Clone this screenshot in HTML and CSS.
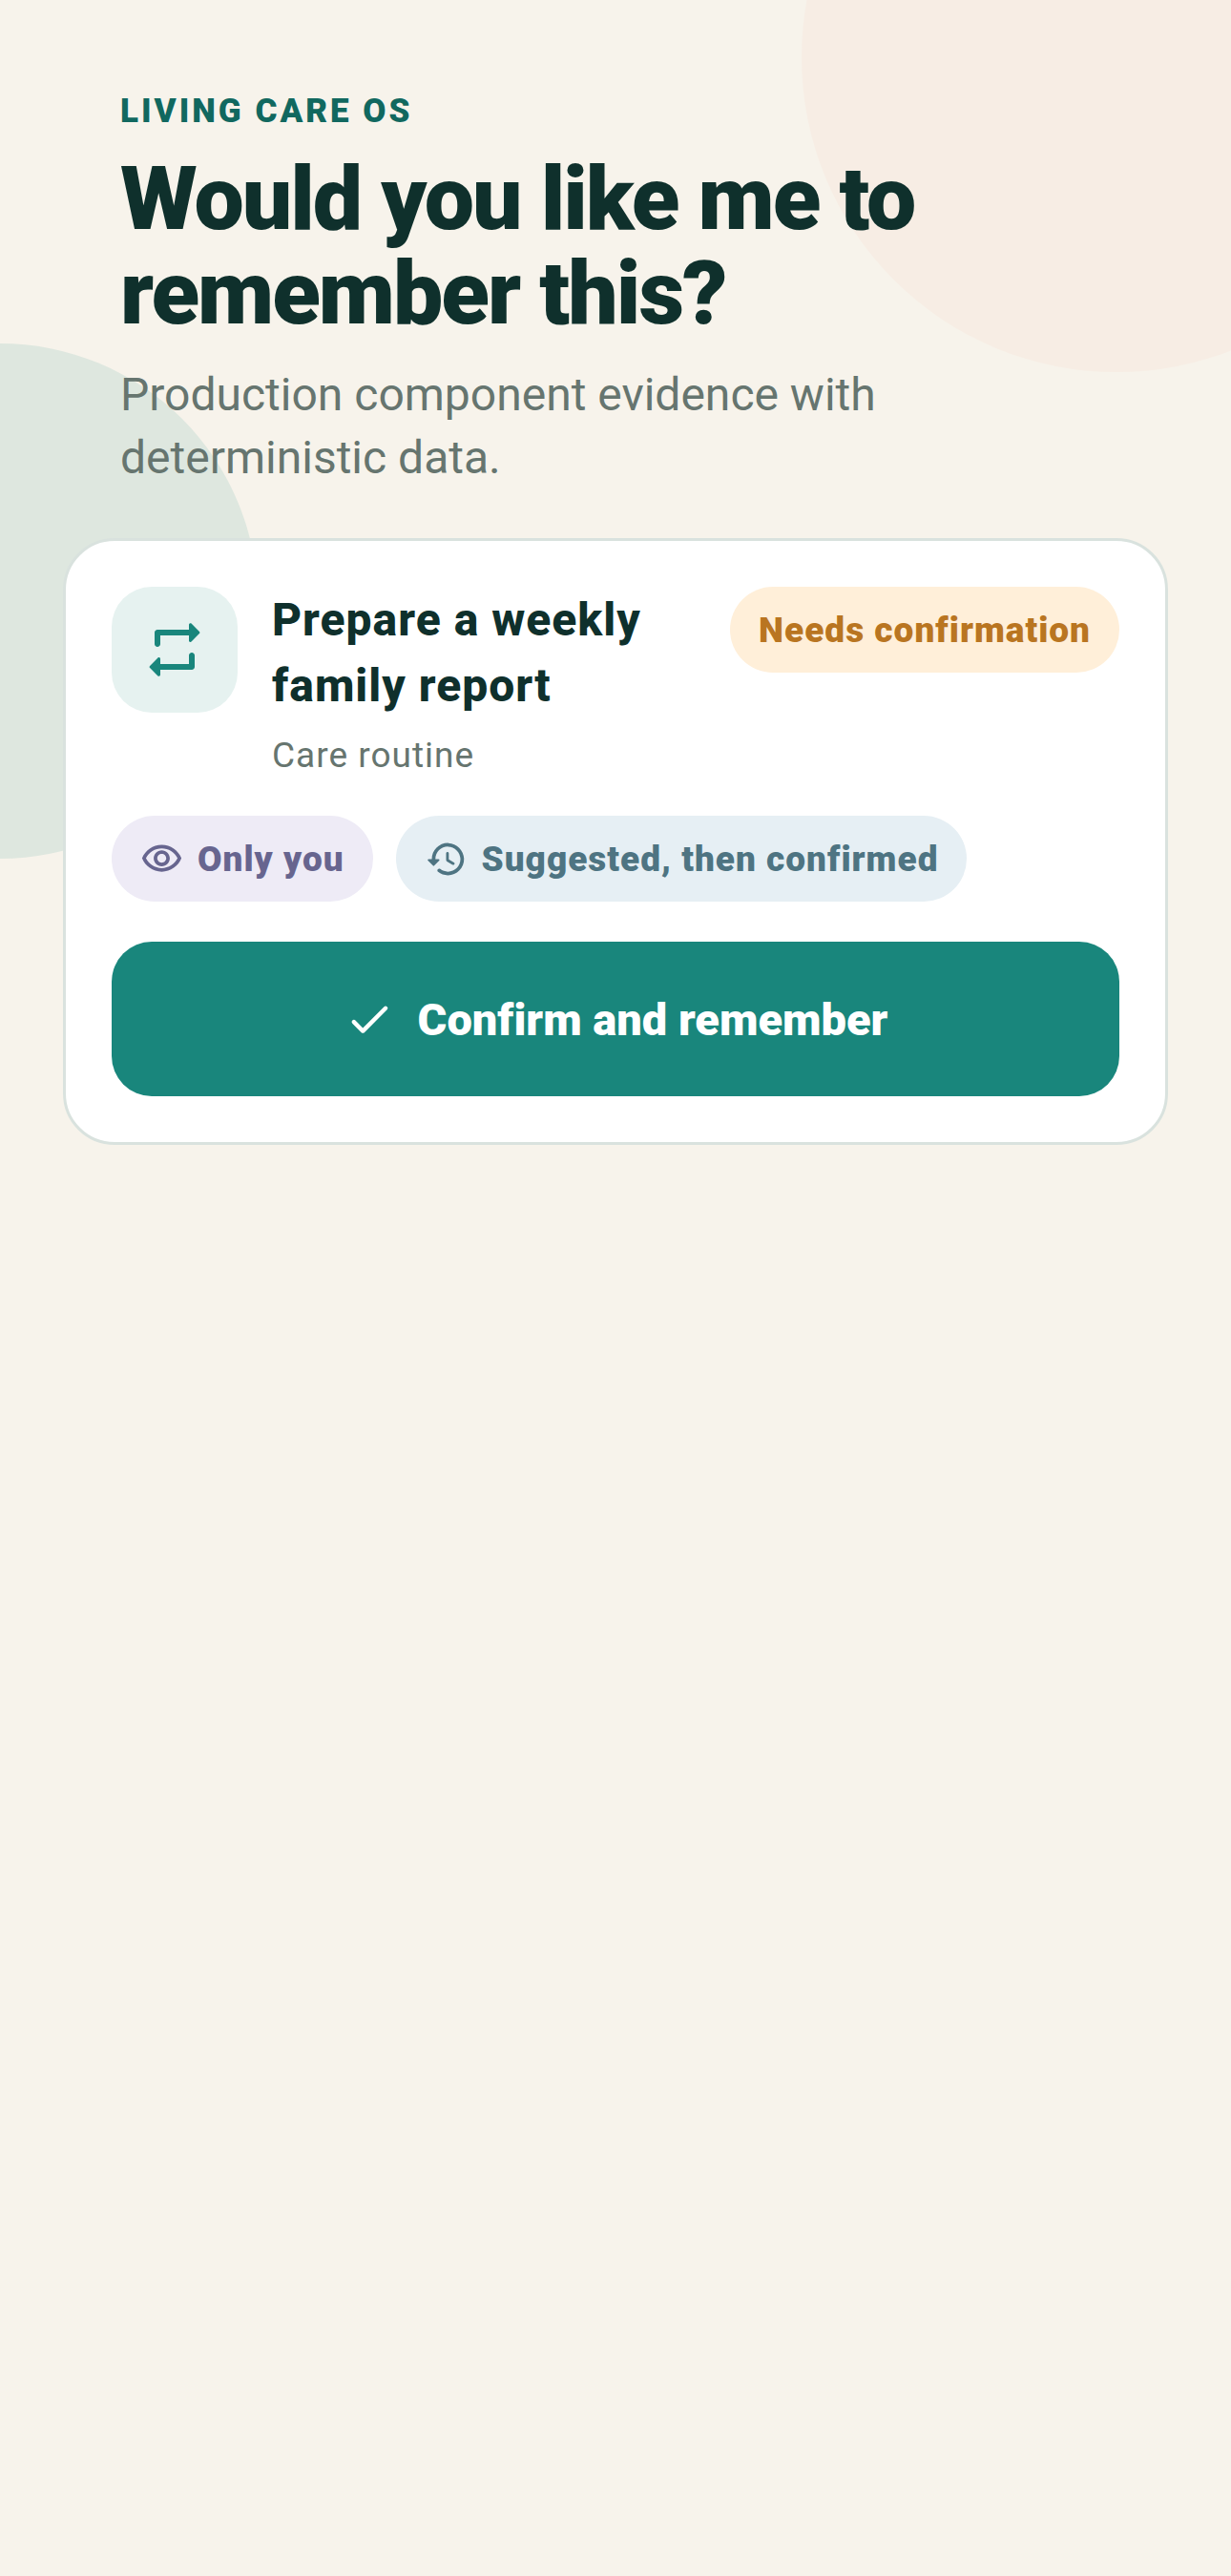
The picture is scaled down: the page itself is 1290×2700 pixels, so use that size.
FILE: index.html
```html
<!DOCTYPE html>
<html lang="en">
<head>
  <meta charset="utf-8">
  <meta name="viewport" content="width=device-width, initial-scale=1">
  <title>Living Care OS</title>
  <link rel="stylesheet" href="styles.css">
</head>
<body>
  <div class="page">
    <div class="blob blob-peach"></div>
    <div class="blob blob-green"></div>
    <main class="content">
      <header class="intro">
        <p class="eyebrow">LIVING CARE OS</p>
        <h1 class="title">Would you like me to remember this?</h1>
        <p class="subtitle">Production component evidence with deterministic data.</p>
      </header>
      <article class="card">
        <div class="card-head">
          <div class="card-icon">
            <svg viewBox="0 0 24 24" width="72" height="72" aria-hidden="true">
              <path d="M7 7h10v1.800c0 .45.540.670.850.350l2.790-2.790c.2-.2.2-.51 0-.71l-2.790-2.790c-.31-.31-.850-.090-.850.360V5H6c-.55 0-1 .45-1 1v4c0 .55.45 1 1 1s1-.45 1-1V7zm10 10H7v-1.800c0-.45-.540-.670-.850-.350l-2.790 2.790c-.2.2-.2.510 0 .710l2.790 2.790c.310.310.850.090.850-.360V19h11c.55 0 1-.45 1-1v-4c0-.55-.45-1-1-1s-1 .45-1 1v3z"/>
            </svg>
          </div>
          <div class="card-text">
            <h2 class="card-title">Prepare a weekly family report</h2>
            <p class="card-kind">Care routine</p>
          </div>
          <span class="chip chip-amber">Needs confirmation</span>
        </div>
        <div class="chips">
          <span class="chip chip-violet">
            <svg viewBox="0 0 24 24" width="45" height="45" aria-hidden="true">
              <path d="M12 6c3.790 0 7.170 2.130 8.820 5.500C19.170 14.870 15.790 17 12 17s-7.170-2.130-8.820-5.500C4.830 8.130 8.210 6 12 6m0-2C7 4 2.730 7.110 1 11.500 2.730 15.890 7 19 12 19s9.270-3.110 11-7.500C21.270 7.110 17 4 12 4zm0 5c1.380 0 2.500 1.120 2.500 2.500S13.380 14 12 14s-2.500-1.120-2.500-2.500S10.620 9 12 9m0-2c-2.480 0-4.500 2.020-4.500 4.500S9.520 16 12 16s4.500-2.020 4.500-4.500S14.480 7 12 7z"/>
            </svg>
            Only you
          </span>
          <span class="chip chip-blue">
            <svg viewBox="0 0 24 24" width="45" height="45" aria-hidden="true">
              <path d="M13.260 3C8.170 2.860 4 6.950 4 12H2.210c-.45 0-.67.540-.350.850l2.790 2.800c.2.2.510.2.710 0l2.790-2.800c.310-.310.090-.850-.360-.850H6c0-3.900 3.180-7.050 7.100-7 3.720.050 6.850 3.180 6.900 6.900.050 3.910-3.100 7.100-7 7.100-1.610 0-3.100-.550-4.280-1.480-.4-.310-.960-.280-1.320.080-.42.420-.390 1.130.080 1.490C9 20.290 10.910 21 13 21c5.050 0 9.140-4.170 9-9.260-.130-4.690-4.050-8.610-8.740-8.740zm-.510 5c-.410 0-.750.340-.750.750v3.680c0 .350.190.680.490.860l3.120 1.850c.360.210.820.090 1.030-.260.210-.360.090-.820-.260-1.030l-2.880-1.710v-3.400c0-.4-.340-.740-.750-.740z"/>
            </svg>
            Suggested, then confirmed
          </span>
        </div>
        <button class="confirm" type="button">
          <svg viewBox="0 0 24 24" width="54" height="54" aria-hidden="true">
            <path d="M9 16.170L5.530 12.700a.996.996 0 1 0-1.410 1.410l4.180 4.180c.390.390 1.020.390 1.410 0L20.290 7.710a.996.996 0 1 0-1.410-1.410L9 16.170z"/>
          </svg>
          Confirm and remember
        </button>
      </article>
    </main>
  </div>
</body>
</html>
```
FILE: styles.css
```css
* {
  box-sizing: border-box;
}

body {
  margin: 0;
  background: #f7f3eb;
  color: #0f302c;
  font-family: Roboto, "Liberation Sans", sans-serif;
  font-variant-ligatures: none;
}

h1,
h2,
p {
  margin: 0;
}

svg {
  flex: none;
  fill: currentColor;
}

.page {
  position: relative;
  min-height: 100vh;
  overflow: hidden;
}

.blob {
  position: absolute;
  border-radius: 50%;
}

.blob-peach {
  top: -270px;
  right: -210px;
  width: 660px;
  height: 660px;
  background: #f7ede4;
}

.blob-green {
  top: 360px;
  left: -270px;
  width: 540px;
  height: 540px;
  background: #dee7df;
}

.content {
  position: relative;
  padding: 90px 66px;
}

.intro {
  padding: 0 60px;
  margin-bottom: 51px;
}

.eyebrow {
  color: #11685f;
  font-size: 35px;
  font-weight: 900;
  line-height: 54px;
  letter-spacing: 3px;
}

.title {
  margin-top: 15px;
  font-size: 93px;
  font-weight: 900;
  line-height: 99px;
  letter-spacing: -2px;
}

.subtitle {
  margin-top: 24px;
  color: #66756f;
  font-size: 48px;
  line-height: 66px;
}

.card {
  padding: 48px;
  border: 3px solid #d9e2de;
  border-radius: 54px;
  background: #fff;
}

.card-head {
  display: flex;
  align-items: flex-start;
  gap: 36px;
}

.card-icon {
  display: flex;
  flex: none;
  align-items: center;
  justify-content: center;
  width: 132px;
  height: 132px;
  border-radius: 42px;
  background: #e6f2f0;
  color: #19867c;
}

.card-text {
  flex: 1;
}

.card-title {
  font-size: 48px;
  font-weight: 800;
  line-height: 69px;
  letter-spacing: 1px;
}

.card-kind {
  margin-top: 12px;
  color: #66756f;
  font-size: 37px;
  line-height: 54px;
  letter-spacing: 1px;
}

.chip {
  display: flex;
  align-items: center;
  gap: 15px;
  height: 90px;
  padding: 0 30px;
  border-radius: 45px;
  font-size: 37px;
  font-weight: 900;
  letter-spacing: 1px;
  white-space: nowrap;
}

.chip-amber {
  background: #ffefd9;
  color: #b97521;
}

.chip-violet {
  background: #eeebf6;
  color: #67658f;
}

.chip-blue {
  background: #e6eff4;
  color: #4e7482;
}

.chips {
  display: flex;
  flex-wrap: wrap;
  gap: 24px;
  margin-top: 36px;
}

.confirm {
  display: flex;
  align-items: center;
  justify-content: center;
  gap: 24px;
  width: 100%;
  height: 162px;
  margin-top: 42px;
  border: 0;
  border-radius: 42px;
  background: #19867c;
  color: #fff;
  font: 900 47px Roboto, "Liberation Sans", sans-serif;
  font-variant-ligatures: none;
}
```
